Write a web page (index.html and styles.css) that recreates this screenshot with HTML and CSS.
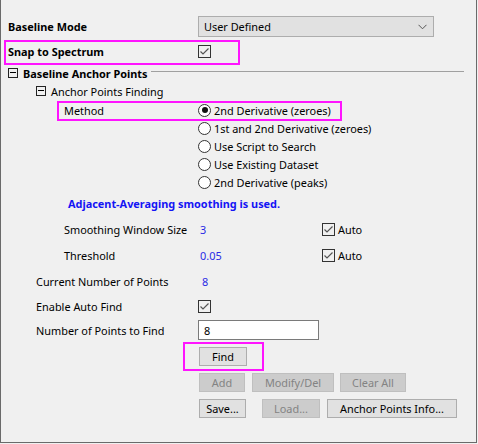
FILE: index.html
```html
<!DOCTYPE html>
<html>
<head>
<meta charset="utf-8">
<link rel="stylesheet" href="styles.css">
</head>
<body>
<div class="win">
  <div class="row r1">
    <div class="lbl i8 b">Baseline Mode</div>
    <div class="combo">
      <span>User Defined</span>
      <svg class="chev" width="9" height="6" viewBox="0 0 9 6"><path d="M0.5 0.8 L4.5 4.8 L8.5 0.8" fill="none" stroke="#555" stroke-width="1"/></svg>
    </div>
  </div>
  <div class="row r2">
    <div class="lbl i8 b">Snap to Spectrum</div>
    <svg class="chk" width="13" height="13" viewBox="0 0 13 13"><rect x="0.5" y="0.5" width="12" height="12" fill="none" stroke="#333"/><path d="M2.5 6.5 L5 9 L10.5 3.5" fill="none" stroke="#555" stroke-width="1.2"/></svg>
  </div>
  <div class="row r3">
    <span class="tog t8"></span>
    <span class="b">Baseline Anchor Points</span>
    <span class="rule"></span>
  </div>
  <div class="row">
    <span class="tog t36"></span>
    <span>Anchor Points Finding</span>
  </div>
  <div class="radios">
    <div class="row">
      <div class="lbl i64">Method</div>
      <span class="rad on"></span><span class="rt">2nd Derivative (zeroes)</span>
    </div>
    <div class="row"><div class="lbl"></div><span class="rad"></span><span class="rt">1st and 2nd Derivative (zeroes)</span></div>
    <div class="row"><div class="lbl"></div><span class="rad"></span><span class="rt">Use Script to Search</span></div>
    <div class="row"><div class="lbl"></div><span class="rad"></span><span class="rt">Use Existing Dataset</span></div>
    <div class="row"><div class="lbl"></div><span class="rad"></span><span class="rt">2nd Derivative (peaks)</span></div>
  </div>
  <div class="row note">Adjacent-Averaging smoothing is used.</div>
  <div class="row m8">
    <div class="lbl i64">Smoothing Window Size</div>
    <span class="val">3</span>
    <svg class="chk auto" width="13" height="13" viewBox="0 0 13 13"><rect x="0.5" y="0.5" width="12" height="12" fill="none" stroke="#333"/><path d="M2.5 6.5 L5 9 L10.5 3.5" fill="none" stroke="#555" stroke-width="1.2"/></svg>
    <span class="rt">Auto</span>
  </div>
  <div class="row m8">
    <div class="lbl i64">Threshold</div>
    <span class="val">0.05</span>
    <svg class="chk auto" width="13" height="13" viewBox="0 0 13 13"><rect x="0.5" y="0.5" width="12" height="12" fill="none" stroke="#333"/><path d="M2.5 6.5 L5 9 L10.5 3.5" fill="none" stroke="#555" stroke-width="1.2"/></svg>
    <span class="rt">Auto</span>
  </div>
  <div class="row m8">
    <div class="lbl i36">Current Number of Points</div>
    <span class="val v8">8</span>
  </div>
  <div class="row m7">
    <div class="lbl i36">Enable Auto Find</div>
    <svg class="chk" width="13" height="13" viewBox="0 0 13 13"><rect x="0.5" y="0.5" width="12" height="12" fill="none" stroke="#333"/><path d="M2.5 6.5 L5 9 L10.5 3.5" fill="none" stroke="#555" stroke-width="1.2"/></svg>
  </div>
  <div class="row rnum">
    <div class="lbl i36">Number of Points to Find</div>
    <div class="input">8</div>
  </div>
  <div class="btns">
    <button class="btn w-find">Find</button>
  </div>
  <div class="btns">
    <button class="btn dis w-add">Add</button>
    <button class="btn dis w-mod">Modify/Del</button>
    <button class="btn dis w-clr">Clear All</button>
  </div>
  <div class="btns">
    <button class="btn w-save">Save...</button>
    <button class="btn dis w-load">Load...</button>
    <button class="btn w-info">Anchor Points Info...</button>
  </div>

  <div class="hl hl1"></div>
  <div class="hl hl2"></div>
  <div class="hl hl3"></div>
</div>
</body>
</html>
```
FILE: styles.css
```css
html, body {
  margin: 0;
  padding: 0;
  background: #f0f0f0;
}
body {
  font-family: "Noto Sans", "Open Sans", sans-serif;
  font-size: 10.9px;
  color: #000;
}
.win {
  position: relative;
  box-sizing: border-box;
  width: 477px;
  height: 443px;
  padding-top: 16px;
  border-left: 1px solid #6a6a6a;
  border-right: 1px solid #6a6a6a;
  border-bottom: 1px solid #6a6a6a;
  margin-left: 0;
}
.row {
  display: flex;
  align-items: center;
  height: 18px;
  white-space: nowrap;
}
.b { font-weight: bold; }
.lbl {
  box-sizing: border-box;
  width: 197px;
  flex: none;
}
.i8 { padding-left: 7px; }
.i36 { padding-left: 35px; }
.i64 { padding-left: 63px; }

.r1 { height: 21px; }
.r2 { margin-top: 5px; }
.r3 { margin-top: 4px; }

.combo {
  box-sizing: border-box;
  width: 236px;
  height: 21px;
  background: #e1e1e1;
  border: 1px solid #adadad;
  display: flex;
  align-items: center;
  justify-content: space-between;
  padding: 0 5px 0 5px;
}
.chev { margin-right: 1px; }

.chk { flex: none; display: block; }

.tog {
  box-sizing: border-box;
  width: 10px;
  height: 10px;
  border: 1px solid #222;
  position: relative;
  flex: none;
  margin-right: 5px;
}
.tog::after {
  content: "";
  position: absolute;
  left: 1px;
  right: 1px;
  top: 3px;
  height: 1px;
  background: #000;
}
.t8 { margin-left: 7px; }
.t36 { margin-left: 35px; }
.rule {
  flex: 1;
  height: 1px;
  background: #a0a0a0;
  margin: 0 12px 4px 3px;
}

.radios { margin-top: 1px; }
.rad {
  box-sizing: border-box;
  width: 13px;
  height: 13px;
  border: 1px solid #333;
  border-radius: 50%;
  flex: none;
  position: relative;
  background: #fff;
}
.rad.on::after {
  content: "";
  position: absolute;
  left: 2.5px;
  top: 2.5px;
  width: 6px;
  height: 6px;
  border-radius: 50%;
  background: #111;
}
.rt { margin-left: 3px; }

.note {
  margin-top: 3px;
  padding-left: 67px;
  font-weight: bold;
  color: #1414f5;
}
.m8 { margin-top: 8px; }
.m7 { margin-top: 7px; }
.val {
  color: #2a2ae6;
  padding-left: 2px;
  width: 122px;
  flex: none;
}
.v8 { padding-left: 4px; }
.auto { margin-left: 0; }

.rnum { margin-top: 5px; height: 20px; }
.input {
  box-sizing: border-box;
  width: 121px;
  height: 20px;
  background: #fff;
  border: 1px solid #7a7a7a;
  padding-left: 5px;
  display: flex;
  align-items: center;
}

.btns {
  display: flex;
  padding-left: 198px;
  margin-top: 7px;
}
.btn {
  box-sizing: border-box;
  height: 19px;
  margin: 0;
  padding: 0;
  font: inherit;
  color: #000;
  background: #e1e1e1;
  border: 1px solid #adadad;
  flex: none;
}
.btn.dis {
  background: #cccccc;
  border-color: #bfbfbf;
  color: #838383;
}
.w-find { width: 48px; }
.w-add { width: 46px; }
.w-mod { width: 82px; margin-left: 7px; }
.w-clr { width: 66px; margin-left: 6px; }
.w-save { width: 47px; }
.w-load { width: 58px; margin-left: 16px; }
.w-info { width: 130px; margin-left: 7px; }

.hl {
  position: absolute;
  box-sizing: border-box;
  border: 2px solid #ff14ff;
}
.hl1 { left: 3px; top: 40px; width: 236px; height: 25px; }
.hl2 { left: 56px; top: 101px; width: 285px; height: 20px; }
.hl3 { left: 182px; top: 342px; width: 81px; height: 29px; }
```
